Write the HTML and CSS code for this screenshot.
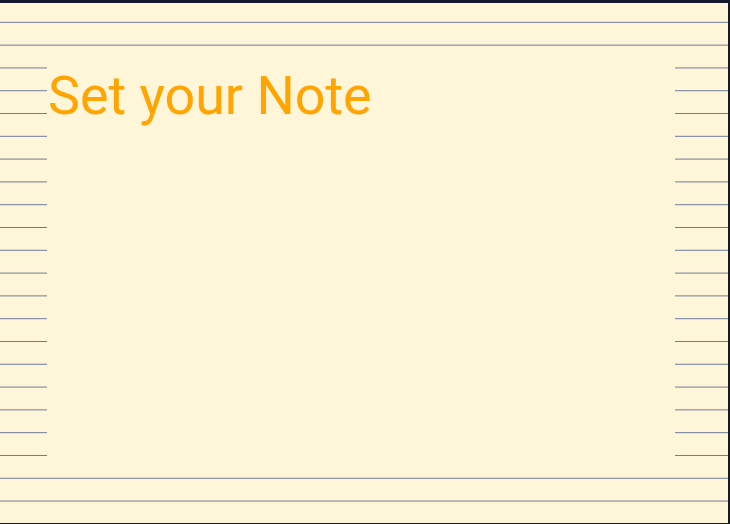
FILE: index.html
```html
<!DOCTYPE html>
<html>
<head>
<meta charset="utf-8">
<link rel="stylesheet" href="styles.css">
</head>
<body>
<div class="frame">
  <div class="paper">
    <div class="note">
      <h1 class="title">Set your Note</h1>
    </div>
  </div>
</div>
</body>
</html>
```
FILE: styles.css
```css
html, body {
  margin: 0;
  padding: 0;
  width: 730px;
  height: 524px;
  overflow: hidden;
  background: #141a2b;
}
.frame {
  box-sizing: border-box;
  width: 730px;
  height: 524px;
  padding: 3px 2px 1px 0;
  background: #141a2b;
}
.paper {
  box-sizing: border-box;
  height: 100%;
  background-color: #fff5d8;
  background-image: linear-gradient(to bottom, transparent 18.6px, #6b7b96 18.6px, #6b7b96 19.8px, transparent 19.8px);
  background-size: 100% 22.8px;
  background-repeat: repeat-y;
  padding: 43px 53px 50px 47px;
  display: flex;
}
.note {
  flex: 1;
  background: #fff5d8;
}
.title {
  margin: 0;
  font-family: Roboto, "Liberation Sans", sans-serif;
  font-weight: 400;
  font-size: 53.8px;
  line-height: 1;
  color: #ffa400;
  padding-top: 23px;
  padding-left: 1px;
}
```
